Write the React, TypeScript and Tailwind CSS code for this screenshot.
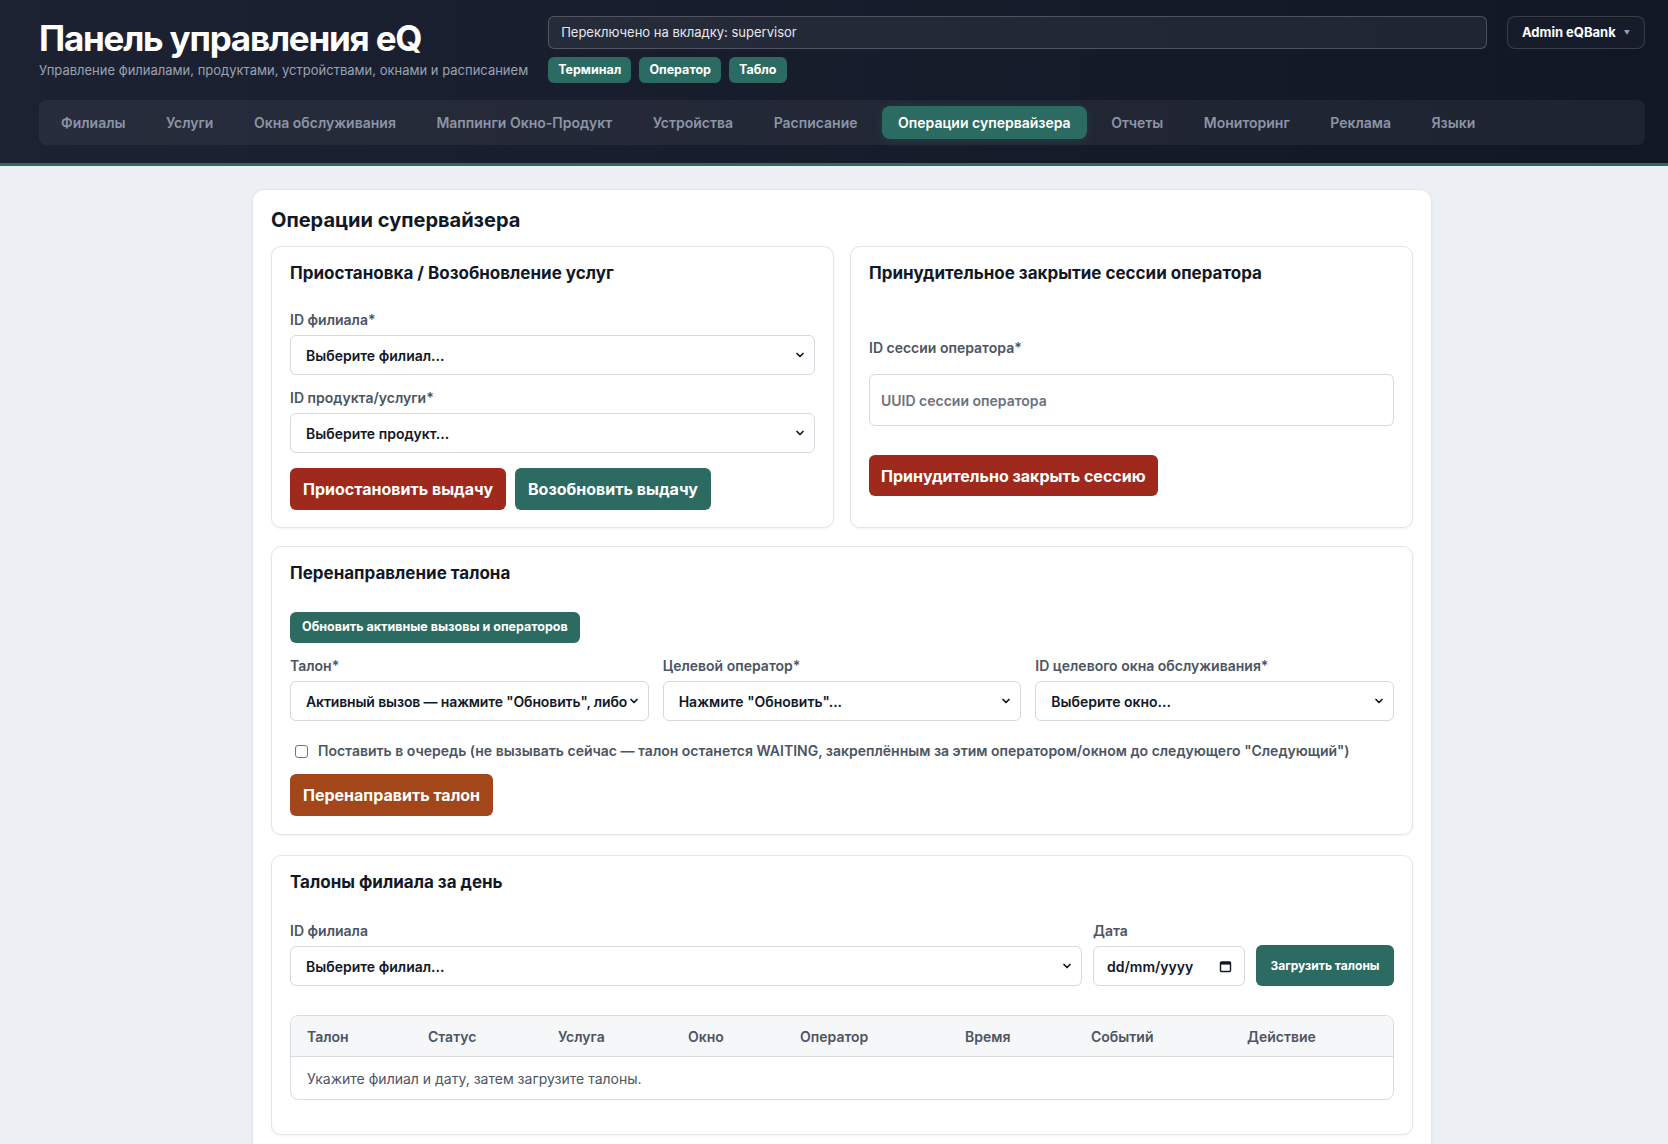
import React from "react";

function Chevron() {
  return (
    <svg className="absolute right-[9px] top-1/2 -translate-y-1/2" width="10" height="10" viewBox="0 0 10 10">
      <path d="M2 3.5l3 3 3-3" fill="none" stroke="#111827" strokeWidth="1.7" strokeLinecap="round" strokeLinejoin="round" />
    </svg>
  );
}

function FakeSelect({ text, className = "", tight = false }: { text: string; className?: string; tight?: boolean }) {
  return (
    <div className={`relative h-[40px] rounded-md border border-[#d5d9e0] bg-white flex items-center pl-[15px] ${tight ? "pr-[12px]" : "pr-[19px]"} overflow-hidden ${className}`}>
      <span className={`min-w-0 whitespace-nowrap overflow-hidden text-[14px] font-semibold text-[#111827] ${tight ? "tracking-[-0.01em]" : ""}`}>{text}</span>
      <Chevron />
    </div>
  );
}

function Label({ children, className = "" }: { children: React.ReactNode; className?: string }) {
  return <div className={`text-[14px] leading-[20px] font-semibold text-[#4b5563] ${className}`}>{children}</div>;
}

function Card({ children, className = "" }: { children: React.ReactNode; className?: string }) {
  return (
    <div className={`bg-white border border-[#e2e5ea] rounded-[10px] shadow-[0_1px_3px_rgba(15,23,42,0.05)] px-[18px] pt-[14px] ${className}`}>
      {children}
    </div>
  );
}

function CardTitle({ children }: { children: React.ReactNode }) {
  return <h3 className="text-[17px] leading-[24px] font-bold text-[#111827]">{children}</h3>;
}

const tabs = [
  "Филиалы",
  "Услуги",
  "Окна обслуживания",
  "Маппинги Окно-Продукт",
  "Устройства",
  "Расписание",
  "Операции супервайзера",
  "Отчеты",
  "Мониторинг",
  "Реклама",
  "Языки",
];

const cols = ["Талон", "Статус", "Услуга", "Окно", "Оператор", "Время", "Событий", "Действие"];

export default function App() {
  return (
    <div className="min-h-[1144px] bg-[#eceff3] font-[family-name:Inter,sans-serif]">
      <header className="bg-gradient-to-r from-[#1c2232] to-[#121725] border-b-[3px] border-[#2c6b61] pt-4 pb-[18px] pl-[39px] pr-[23px]">
        <div className="flex items-start gap-5">
          <div className="shrink-0">
            <h1 className="text-[35px] leading-[44px] font-bold text-white tracking-[-0.035em]">Панель управления eQ</h1>
            <p className="text-[13px] leading-[18px] text-[#9aa3b2] mt-[1px]">
              Управление филиалами, продуктами, устройствами, окнами и расписанием
            </p>
          </div>
          <div className="flex-1 flex flex-col gap-2">
            <div className="h-[33px] rounded-md border border-white/20 bg-white/[0.06] flex items-center px-3 text-[13px] text-[#e5e7eb]">
              Переключено на вкладку: supervisor
            </div>
            <div className="flex gap-[8px]">
              {["Терминал", "Оператор", "Табло"].map((b) => (
                <button key={b} className="h-[26px] px-[10px] rounded-md bg-[#2c6b61] text-white text-[12.5px] font-bold">
                  {b}
                </button>
              ))}
            </div>
          </div>
          <button className="h-[33px] px-[14px] rounded-lg border border-white/15 bg-white/[0.02] flex items-center gap-[8px] text-white text-[13px] font-bold">
            Admin eQBank
            <span className="text-[6px] text-[#9aa3b2]">▼</span>
          </button>
        </div>
        <nav className="mt-[17px] rounded-lg bg-white/[0.05] p-[6px] flex gap-[8.5px]">
          {tabs.map((t) => (
            <div
              key={t}
              className={
                t === "Операции супервайзера"
                  ? "h-[33px] px-4 flex items-center rounded-lg bg-[#2c6b61] text-white text-[14px] font-semibold shadow-[0_2px_8px_rgba(44,107,97,0.35)]"
                  : "h-[33px] px-4 flex items-center rounded-lg text-[#8c95a6] text-[14px] font-semibold"
              }
            >
              {t}
            </div>
          ))}
        </nav>
      </header>

      <main className="pt-[23px] pl-4">
        <div className="mx-auto w-[1180px] bg-white border border-[#e3e6eb] rounded-xl shadow-[0_1px_3px_rgba(15,23,42,0.05)] px-[18px] pt-[16px] pb-[20px]">
          <h2 className="text-[20px] leading-[28px] font-bold text-[#111827]">Операции супервайзера</h2>

          <div className="mt-3 grid grid-cols-2 gap-4">
            <Card className="pb-[17px]">
              <CardTitle>Приостановка / Возобновление услуг</CardTitle>
              <Label className="mt-[25px]">ID филиала*</Label>
              <FakeSelect className="mt-[5px]" text="Выберите филиал..." />
              <Label className="mt-[13px]">ID продукта/услуги*</Label>
              <FakeSelect className="mt-[5px]" text="Выберите продукт..." />
              <div className="mt-[15px] flex gap-[9px]">
                <button className="h-[42px] px-[13px] rounded-md bg-[#a0291d] text-white text-[16px] font-bold">
                  Приостановить выдачу
                </button>
                <button className="h-[42px] px-[13px] rounded-md bg-[#2c6b61] text-white text-[16px] font-bold">
                  Возобновить выдачу
                </button>
              </div>
            </Card>

            <Card className="pb-[17px]">
              <CardTitle>Принудительное закрытие сессии оператора</CardTitle>
              <Label className="mt-[53px]">ID сессии оператора*</Label>
              <div className="mt-[16px] h-[52px] rounded-md border border-[#d5d9e0] bg-white flex items-center px-[11px] text-[14px] font-semibold text-[#6b7280]">
                UUID сессии оператора
              </div>
              <button className="mt-[29px] h-[41px] px-[12px] rounded-md bg-[#a0291d] text-white text-[16px] font-bold">
                Принудительно закрыть сессию
              </button>
            </Card>
          </div>

          <Card className="mt-[18px] pb-[18px]">
            <CardTitle>Перенаправление талона</CardTitle>
            <button className="mt-[27px] h-[31px] px-[12px] rounded-md bg-[#2c6b61] text-white text-[12.5px] font-bold">
              Обновить активные вызовы и операторов
            </button>
            <div className="mt-[13px] grid grid-cols-3 gap-[14px]">
              <div>
                <Label>Талон*</Label>
                <FakeSelect className="mt-[5px]" tight text={'Активный вызов — нажмите "Обновить", либо'} />
              </div>
              <div>
                <Label>Целевой оператор*</Label>
                <FakeSelect className="mt-[5px]" text={'Нажмите "Обновить"...'} />
              </div>
              <div>
                <Label>ID целевого окна обслуживания*</Label>
                <FakeSelect className="mt-[5px]" text="Выберите окно..." />
              </div>
            </div>
            <label className="mt-[20px] flex items-center gap-[10px] pl-[5px] text-[14px] leading-[20px] font-semibold text-[#4b5563]">
              <span className="w-[13px] h-[13px] rounded-[3px] border border-[#767676] bg-white shrink-0" />
              Поставить в очередь (не вызывать сейчас — талон останется WAITING, закреплённым за этим оператором/окном до следующего "Следующий")
            </label>
            <button className="mt-[13px] h-[42px] px-[13px] rounded-md bg-[#a3461a] text-white text-[16px] font-bold">
              Перенаправить талон
            </button>
          </Card>

          <Card className="mt-[20px] pb-[34px]">
            <CardTitle>Талоны филиала за день</CardTitle>
            <div className="mt-[27px] flex items-end gap-[11px]">
              <div className="flex-1">
                <Label>ID филиала</Label>
                <FakeSelect className="mt-[5px]" text="Выберите филиал..." />
              </div>
              <div className="w-[152px]">
                <Label>Дата</Label>
                <div className="mt-[5px] h-[40px] rounded-md border border-[#d5d9e0] bg-white flex items-center justify-between pl-[13px] pr-[12px]">
                  <span className="text-[14px] font-semibold text-[#111827]">dd/mm/yyyy</span>
                  <svg width="13" height="13" viewBox="0 0 13 13">
                    <rect x="1.5" y="2" width="10" height="9.5" rx="1" fill="none" stroke="#111827" strokeWidth="1.4" />
                    <rect x="1.5" y="2" width="10" height="2.6" fill="#111827" />
                  </svg>
                </div>
              </div>
              <button className="w-[138px] h-[41px] rounded-md bg-[#2c6b61] text-white text-[12px] font-bold">
                Загрузить талоны
              </button>
            </div>

            <div className="mt-[29px] rounded-lg border border-[#d8dce3] overflow-hidden">
              <div className="grid grid-cols-[121px_130px_130px_112px_165px_126px_156px_1fr] h-[41px] items-center bg-[#f6f7f9] border-b border-[#d8dce3]">
                {cols.map((c) => (
                  <div key={c} className="px-4 text-[14px] font-semibold text-[#4b5563]">
                    {c}
                  </div>
                ))}
              </div>
              <div className="h-[42px] flex items-center px-4 text-[14px] text-[#4b5563]">
                Укажите филиал и дату, затем загрузите талоны.
              </div>
            </div>
          </Card>
        </div>
      </main>
    </div>
  );
}
